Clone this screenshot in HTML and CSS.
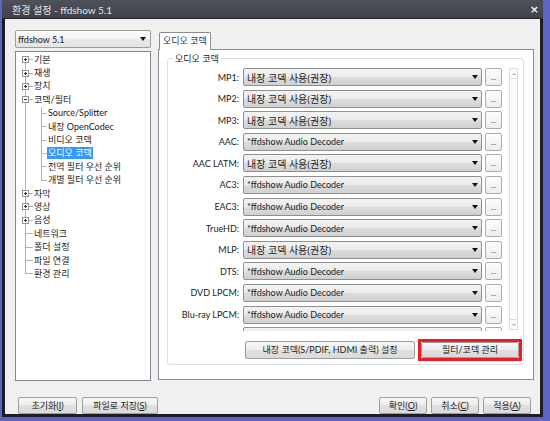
FILE: index.html
```html
<!DOCTYPE html>
<html lang="ko">
<head>
<meta charset="utf-8">
<title>환경 설정 - ffdshow 5.1</title>
<link rel="stylesheet" href="styles.css">
</head>
<body>
<div class="window">
  <div class="titlebar">
    <span class="title">환경 설정 - ffdshow 5.1</span>
    <span class="close">×</span>
  </div>
  <div class="client">
    <div class="main">
      <div class="leftcol">
        <div class="combo top"><span>ffdshow 5.1</span></div>
        <div class="tree">
          <div class="node"><span class="g first"><svg width="7" height="7" viewBox="0 0 7 7"><rect x=".5" y=".5" width="6" height="6" fill="#fff" stroke="#909090"/><path d="M2 3.5h3M3.5 2v3" stroke="#333"/></svg></span><span class="lbl">기본</span></div>
          <div class="node"><span class="g mid"><svg width="7" height="7" viewBox="0 0 7 7"><rect x=".5" y=".5" width="6" height="6" fill="#fff" stroke="#909090"/><path d="M2 3.5h3M3.5 2v3" stroke="#333"/></svg></span><span class="lbl">재생</span></div>
          <div class="node"><span class="g mid"><svg width="7" height="7" viewBox="0 0 7 7"><rect x=".5" y=".5" width="6" height="6" fill="#fff" stroke="#909090"/><path d="M2 3.5h3M3.5 2v3" stroke="#333"/></svg></span><span class="lbl">장치</span></div>
          <div class="node"><span class="g mid"><svg width="7" height="7" viewBox="0 0 7 7"><rect x=".5" y=".5" width="6" height="6" fill="#fff" stroke="#909090"/><path d="M2 3.5h3" stroke="#333"/></svg></span><span class="lbl">코덱/필터</span></div>
          <div class="node"><span class="g pass"></span><span class="c mid"></span><span class="lbl">Source/Splitter</span></div>
          <div class="node"><span class="g pass"></span><span class="c mid"></span><span class="lbl">내장 OpenCodec</span></div>
          <div class="node"><span class="g pass"></span><span class="c mid"></span><span class="lbl">비디오 코덱</span></div>
          <div class="node"><span class="g pass"></span><span class="c mid"></span><span class="lbl sel">오디오 코덱</span></div>
          <div class="node"><span class="g pass"></span><span class="c mid"></span><span class="lbl">전역 필터 우선 순위</span></div>
          <div class="node"><span class="g pass"></span><span class="c last"></span><span class="lbl">개별 필터 우선 순위</span></div>
          <div class="node"><span class="g mid"><svg width="7" height="7" viewBox="0 0 7 7"><rect x=".5" y=".5" width="6" height="6" fill="#fff" stroke="#909090"/><path d="M2 3.5h3M3.5 2v3" stroke="#333"/></svg></span><span class="lbl">자막</span></div>
          <div class="node"><span class="g mid"><svg width="7" height="7" viewBox="0 0 7 7"><rect x=".5" y=".5" width="6" height="6" fill="#fff" stroke="#909090"/><path d="M2 3.5h3M3.5 2v3" stroke="#333"/></svg></span><span class="lbl">영상</span></div>
          <div class="node"><span class="g mid"><svg width="7" height="7" viewBox="0 0 7 7"><rect x=".5" y=".5" width="6" height="6" fill="#fff" stroke="#909090"/><path d="M2 3.5h3M3.5 2v3" stroke="#333"/></svg></span><span class="lbl">음성</span></div>
          <div class="node"><span class="g mid"></span><span class="lbl">네트워크</span></div>
          <div class="node"><span class="g mid"></span><span class="lbl">폴더 설정</span></div>
          <div class="node"><span class="g mid"></span><span class="lbl">파일 연결</span></div>
          <div class="node"><span class="g last"></span><span class="lbl">환경 관리</span></div>
        </div>
      </div>
      <div class="rightcol">
        <div class="tabs"><div class="tab">오디오 코덱</div></div>
        <div class="panel">
          <fieldset class="group">
            <legend>오디오 코덱</legend>
            <div class="listwrap">
              <div class="rows">
                <div class="row"><span class="lab">MP1:</span><div class="combo"><span class="ko">내장 코덱 사용(권장)</span></div><div class="dots">...</div></div>
                <div class="row"><span class="lab">MP2:</span><div class="combo"><span class="ko">내장 코덱 사용(권장)</span></div><div class="dots">...</div></div>
                <div class="row"><span class="lab">MP3:</span><div class="combo"><span class="ko">내장 코덱 사용(권장)</span></div><div class="dots">...</div></div>
                <div class="row"><span class="lab">AAC:</span><div class="combo"><span>*ffdshow Audio Decoder</span></div><div class="dots">...</div></div>
                <div class="row"><span class="lab">AAC LATM:</span><div class="combo"><span class="ko">내장 코덱 사용(권장)</span></div><div class="dots">...</div></div>
                <div class="row"><span class="lab">AC3:</span><div class="combo"><span>*ffdshow Audio Decoder</span></div><div class="dots">...</div></div>
                <div class="row"><span class="lab">EAC3:</span><div class="combo"><span>*ffdshow Audio Decoder</span></div><div class="dots">...</div></div>
                <div class="row"><span class="lab">TrueHD:</span><div class="combo"><span>*ffdshow Audio Decoder</span></div><div class="dots">...</div></div>
                <div class="row"><span class="lab">MLP:</span><div class="combo"><span class="ko">내장 코덱 사용(권장)</span></div><div class="dots">...</div></div>
                <div class="row"><span class="lab">DTS:</span><div class="combo"><span>*ffdshow Audio Decoder</span></div><div class="dots">...</div></div>
                <div class="row"><span class="lab">DVD LPCM:</span><div class="combo"><span>*ffdshow Audio Decoder</span></div><div class="dots">...</div></div>
                <div class="row"><span class="lab">Blu-ray LPCM:</span><div class="combo"><span>*ffdshow Audio Decoder</span></div><div class="dots">...</div></div>
                <div class="row"><span class="lab"></span><div class="combo"></div><div class="dots"></div></div>
              </div>
              <div class="scroll"><div class="sb up"></div><div class="sb down"></div></div>
            </div>
            <div class="actions">
              <button class="btn wide">내장 코덱(S/PDIF, HDMI 출력) 설정</button>
              <div class="mark"><button class="btn">필터/코덱 관리</button></div>
            </div>
          </fieldset>
        </div>
      </div>
    </div>
    <div class="footer">
      <div class="fgroup left">
        <button class="btn fb w59">초기화(<u>I</u>)</button>
        <button class="btn fb w76">파일로 저장(<u>S</u>)</button>
      </div>
      <div class="fgroup right">
        <button class="btn fb w48">확인(<u>O</u>)</button>
        <button class="btn fb w48">취소(<u>C</u>)</button>
        <button class="btn fb w48">적용(<u>A</u>)</button>
      </div>
    </div>
  </div>
</div>
</body>
</html>
```

FILE: styles.css
```css
* { box-sizing: border-box; }
html, body { margin: 0; padding: 0; }
body {
  width: 550px;
  height: 421px;
  overflow: hidden;
  background: #5c64c6;
  font-family: Lato, "Noto Sans CJK KR", sans-serif;
  font-size: 9px;
  color: #1b1b1b;
}
.window {
  margin: 0 7px 0 2px;
  height: 417px;
  background: #1e1e20;
  padding: 0 3px 3px 3px;
  display: flex;
  flex-direction: column;
}
.titlebar {
  flex: none;
  margin: 0 -3px;
  height: 19px;
  background: linear-gradient(#4e505a, #40424b);
  border-bottom: 1px solid #25262b;
  display: flex;
  align-items: center;
  justify-content: space-between;
  padding: 0 4px 0 10px;
}
.title { color: #e4e4e4; font-size: 10px; }
.close { color: #f2f2f2; font-family: "DejaVu Sans", sans-serif; font-size: 11px; font-weight: bold; line-height: 1; }
.client {
  flex: 1;
  background: #f0f0f0;
  padding: 11px 6px 0 10px;
  display: flex;
  flex-direction: column;
}
.main { display: flex; gap: 7px; }
.leftcol { width: 136px; display: flex; flex-direction: column; gap: 3px; }

/* combos */
.combo {
  height: 18px;
  border: 1px solid #8e8f8f;
  border-radius: 2px;
  background: linear-gradient(#f3f3f3, #ebebeb 50%, #dddddd 50%, #d0d0d0);
  display: flex;
  align-items: center;
  padding: 0 3px 0 3px;
  white-space: nowrap;
}
.combo::after {
  content: "";
  margin-left: auto;
  border-left: 3.5px solid transparent;
  border-right: 3.5px solid transparent;
  border-top: 4px solid #111;
}
.combo.top {
  background: linear-gradient(#fbfbfb, #f3f3f3 50%, #e9e9e9 50%, #e4e4e4);
  border-color: #9c9c9c;
  padding-left: 2px;
  padding-right: 4px;
}
.ko { font-size: 10px; }

/* tree */
.tree {
  height: 330px;
  border: 1px solid #828790;
  background: #fff;
  padding: 1px 0 0 2px;
}
.node { display: flex; height: 13.4px; white-space: nowrap; }
.g, .c {
  flex: none;
  height: 100%;
  display: flex;
  align-items: center;
  --ln: linear-gradient(#b3b3b3, #b3b3b3);
}
.g { width: 15px; }
.c { width: 14px; }
.g svg { margin-left: 4px; }
.g.first { background: var(--ln) 7px 50% / 100% 1px no-repeat, var(--ln) 7px 100% / 1px 50% no-repeat; }
.g.mid { background: var(--ln) 7px 50% / 100% 1px no-repeat, var(--ln) 7px 0 / 1px 100% no-repeat; }
.g.last { background: var(--ln) 7px 50% / 100% 1px no-repeat, var(--ln) 7px 0 / 1px 50% no-repeat; }
.g.pass { background: var(--ln) 7px 0 / 1px 100% no-repeat; }
.c.mid { background: var(--ln) 8px 50% / 100% 1px no-repeat, var(--ln) 8px 0 / 1px 100% no-repeat; }
.c.last { background: var(--ln) 8px 50% / 100% 1px no-repeat, var(--ln) 8px 0 / 1px 50% no-repeat; }
.lbl { align-self: center; line-height: 12px; padding: 0 1px; }
.lbl.sel { background: #3399ff; color: #fff; }

/* tabs */
.rightcol { width: 376px; display: flex; flex-direction: column; }
.tabs { height: 19px; display: flex; align-items: flex-end; padding-left: 1px; }
.tab {
  height: 18px;
  margin-bottom: -1px;
  position: relative;
  z-index: 1;
  background: #fff;
  border: 1px solid #898c95;
  border-bottom: none;
  border-radius: 2px 2px 0 0;
  padding: 0 3px;
  line-height: 16px;
  color: #1c2f52;
}
.panel {
  height: 331px;
  border: 1px solid #898c95;
  background: #fff;
  display: flex;
  flex-direction: column;
}
.group {
  margin: 3px 9px 0 8px;
  padding: 4px 0 3px 0;
  border: 1px solid #d5dfe5;
  border-radius: 3px;
  min-width: 0;
}
.group legend {
  margin-left: 5px;
  padding: 0 2px;
  line-height: 11px;
}
.listwrap { display: flex; height: 263px; padding-right: 5px; }
.rows {
  width: 334px;
  height: 263px;
  overflow: hidden;
  display: flex;
  flex-direction: column;
  gap: 3.6px;
}
.row { flex: none; display: flex; align-items: center; height: 18px; }
.lab { width: 71px; margin-right: 4px; text-align: right; white-space: nowrap; }
.row .combo { width: 239px; margin-right: 3px; }
.dots {
  width: 17px;
  height: 18px;
  border: 1px solid #acacac;
  border-radius: 2px;
  background: linear-gradient(#fdfdfd, #ededed);
  text-align: center;
  font-size: 8px;
  line-height: 16px;
  color: #555;
}
.scroll {
  width: 9px;
  height: 262px;
  margin-left: 7px;
  border: 1px solid #dddddd;
  background: #fcfcfc;
  display: flex;
  flex-direction: column;
  justify-content: space-between;
}
.sb { height: 10px; display: flex; align-items: center; justify-content: center; }
.sb.up { border-bottom: 1px solid #dddddd; }
.sb.down { border-top: 1px solid #dddddd; }
.sb.up::after { content: ""; border-left: 2px solid transparent; border-right: 2px solid transparent; border-bottom: 2px solid #b0b0b0; }
.sb.down::after { content: ""; border-left: 2px solid transparent; border-right: 2px solid transparent; border-top: 2px solid #b0b0b0; }

/* buttons */
.btn {
  font: inherit;
  color: #1b1b1b;
  height: 18px;
  padding: 0;
  border: 1px solid #9e9e9e;
  border-radius: 2px;
  background: linear-gradient(#f7f7f7, #ececec 50%, #e0e0e0 50%, #dadada);
  line-height: 16px;
  white-space: nowrap;
}
.actions {
  display: flex;
  justify-content: flex-end;
  align-items: center;
  gap: 3px;
  height: 22px;
  margin-top: 8px;
  margin-right: 1px;
}
.btn.wide { width: 170px; }
.mark {
  width: 104px;
  height: 22px;
  border: 3px solid #ea1c24;
  display: flex;
}
.mark .btn { flex: 1; height: 100%; line-height: 14px; }

.footer {
  display: flex;
  justify-content: space-between;
  margin-top: 16px;
  padding: 0 3px;
}
.fgroup { display: flex; }
.fgroup.left { gap: 5px; }
.fgroup.right { gap: 4px; }
.fb { height: 17px; line-height: 15px; }
.w59 { width: 59px; }
.w76 { width: 76px; }
.w48 { width: 48px; }
```
